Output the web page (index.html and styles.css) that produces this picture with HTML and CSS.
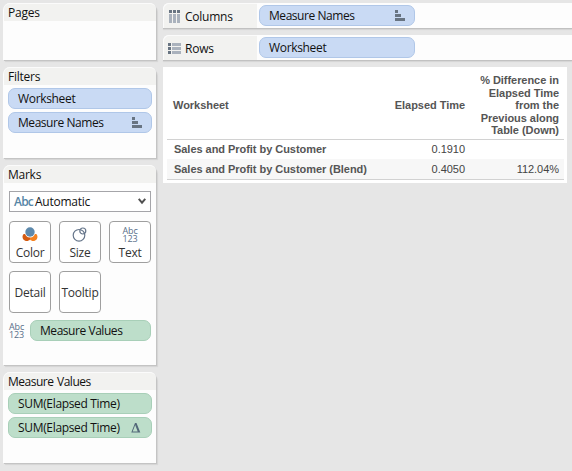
FILE: index.html
```html
<!DOCTYPE html>
<html lang="en">
<head>
<meta charset="utf-8">
<title>Worksheet</title>
<link rel="stylesheet" href="styles.css">
</head>
<body>
<div class="app">
  <aside class="side">
    <section class="card pages"><h2>Pages</h2></section>
    <section class="card filters">
      <h2>Filters</h2>
      <div class="pills">
        <div class="pill blue"><span>Worksheet</span></div>
        <div class="pill blue"><span class="tight">Measure Names</span>
          <svg class="sort" width="10" height="11"><path d="M0 0h3v3H0zM0 4h6v3H0zM0 8h10v3H0z" fill="#687482"/></svg></div>
      </div>
    </section>
    <section class="card marks">
      <h2>Marks</h2>
      <div class="select"><b>Abc</b><span>Automatic</span>
        <svg width="8" height="7"><path d="M.7.8L4 4.600 7.300.8" fill="none" stroke="#505050" stroke-width="2"/></svg></div>
      <div class="grid">
        <div class="btn"><svg width="16" height="15"><path d="M1.800 7C-.3 8.500.2 13 3.200 13.800c2 .6 3.700 0 4.800-1.300V7z" fill="#d45a10"/><path d="M14.200 7c2.100 1.500 1.600 6-1.400 6.800-2 .6-3.700 0-4.800-1.300V7z" fill="#f58220"/><circle cx="8" cy="5.300" r="5.300" fill="#fff"/><circle cx="8" cy="5" r="4.700" fill="#5d89ac"/></svg><span>Color</span></div>
        <div class="btn"><svg width="16" height="15"><g fill="none" stroke="#65758a" stroke-width="1.200"><circle cx="7" cy="8.300" r="5.800"/><circle cx="10.800" cy="4" r="3"/></g></svg><span>Size</span></div>
        <div class="btn"><div class="abc"><span>Abc</span><span>123</span></div><span>Text</span></div>
        <div class="btn plain"><span>Detail</span></div>
        <div class="btn plain"><span>Tooltip</span></div>
      </div>
      <div class="encoding"><div class="abc"><span>Abc</span><span>123</span></div><div class="pill green"><span class="tight">Measure Values</span></div></div>
    </section>
    <section class="card values">
      <h2>Measure Values</h2>
      <div class="pills">
        <div class="pill green"><span>SUM(Elapsed Time)</span></div>
        <div class="pill green"><span>SUM(Elapsed Time)</span>
          <svg class="delta" width="10" height="10"><path fill-rule="evenodd" d="M4 0h1.500L9.300 9.500H.3zM4.200 2L1.700 8.500h5z" fill="#536879"/></svg></div>
      </div>
    </section>
  </aside>
  <main class="main">
    <div class="shelf">
      <div class="label"><svg width="13" height="13"><path d="M1 0h3v3H1zM5 0h3v3H5zM9 0h3v3H9z" fill="#687482"/><path d="M1 4h3v9H1zM5 4h3v9H5zM9 4h3v9H9z" fill="#aab2bd"/></svg><span>Columns</span></div>
      <div class="pill blue"><span class="tight">Measure Names</span>
        <svg class="sort" width="10" height="11"><path d="M0 0h3v3H0zM0 4h6v3H0zM0 8h10v3H0z" fill="#687482"/></svg></div>
    </div>
    <div class="shelf">
      <div class="label"><svg width="13" height="13"><path d="M0 1h3v3H0zM0 5h3v3H0zM0 9h3v3H0z" fill="#687482"/><path d="M4 1h9v3H4zM4 5h9v3H4zM4 9h9v3H4z" fill="#aab2bd"/></svg><span>Rows</span></div>
      <div class="pill blue"><span>Worksheet</span></div>
    </div>
    <div class="view">
      <div class="row head"><div class="c1">Worksheet</div><div class="c2">Elapsed Time</div><div class="c3">% Difference in<br>Elapsed Time<br>from the<br>Previous along<br>Table (Down)</div></div>
      <div class="row first"><div class="c1">Sales and Profit by Customer</div><div class="c2">0.1910</div><div class="c3"></div></div>
      <div class="row alt"><div class="c1">Sales and Profit by Customer (Blend)</div><div class="c2">0.4050</div><div class="c3">112.04%</div></div>
    </div>
  </main>
</div>
</body>
</html>
```
FILE: styles.css
```css
* { box-sizing: border-box; }
body { margin: 0; background: #e6e6e6; color: #111; font: 12px/16px "Open Sans", "Noto Sans", sans-serif; overflow: hidden; }
svg { display: block; flex: none; }
.app { display: flex; gap: 7px; height: 471px; padding: 3px 0 0 3px; }
.side { width: 153px; display: flex; flex-direction: column; gap: 7px; flex: none; }
.card { background: #fdfdfd; border-radius: 7px 7px 0 0; box-shadow: 1px 1px 0 #c4c4c4, 2px 2px 1px #d4d4d4; flex: none; }
.card h2 { margin: 0 0 0 1px; height: 18px; padding: 1px 0 0 4px; background: #f2f2f0; border-top: 1px solid #fbfbfb; border-radius: 6px 6px 0 0; font-size: 12px; font-weight: 400; line-height: 16px; letter-spacing: -.55px; word-spacing: 1px; }
.pages h2, .filters h2, .marks h2 { letter-spacing: -.25px; }
.values h2 { letter-spacing: -.5px; }
.pages { height: 57px; }
.filters, .values { height: 91px; }
.marks { height: 200px; }
.pills { padding: 3px 4px 0 5px; display: flex; flex-direction: column; gap: 3px; }
.pill { height: 21px; border: 1px solid; border-radius: 7px; padding: 0 9px; display: flex; align-items: center; line-height: 19px; white-space: nowrap; letter-spacing: -.33px; }
.tight { letter-spacing: -.45px; }
.blue { background: #c9daf4; border-color: #b0c7e8; }
.green { background: #bddeca; border-color: #a8cfb8; }
.sort { margin-left: auto; }
.delta { margin-left: auto; margin-right: 1px; }
.select { margin: 8px 5px 0 6px; height: 21px; border: 1px solid #a5a5a9; background: #fff; display: flex; align-items: center; padding: 0 4px; letter-spacing: -.25px; }
.select b { width: 21px; color: #5686a6; font-weight: 600; letter-spacing: -.8px; }
.select svg { margin-left: auto; }
.grid { margin: 9px 5px 0 6px; display: grid; grid-template-columns: repeat(3, 42px); grid-auto-rows: 42px; gap: 8px; }
.btn { border: 1px solid #9f9f9f; border-radius: 4px; background: #fff; display: flex; flex-direction: column; align-items: center; justify-content: space-between; padding: 5px 0 1px; color: #333; white-space: nowrap; letter-spacing: -.25px; }
.plain { justify-content: center; padding: 1px 0 0; }
.abc { display: flex; flex-direction: column; font-size: 9px; line-height: 8px; color: #586e89; letter-spacing: -.1px; font-weight: 500; }
.encoding { margin: 7px 5px 0 6px; display: flex; align-items: center; justify-content: space-between; }
.encoding .pill { width: 121px; }
.main { flex: 1; min-width: 0; }
.shelf { display: flex; height: 25px; margin-bottom: 7px; background: #fdfdfd; border-radius: 6px 0 0; box-shadow: 0 1px 0 #c1c1c1, 0 2px 1px #d4d4d4; }
.label { width: 94px; background: #f2f2f0; border: solid #fbfbfb; border-width: 1px 0 0 1px; border-radius: 6px 0 0; display: flex; align-items: center; padding: 1px 0 0 4px; gap: 4px; letter-spacing: -.25px; }
.label svg { margin-top: -1px; }
.shelf .pill { width: 156px; margin: 2px 0 0 2px; }
.view { width: 404px; height: 116px; padding: 5px 3px 0 4px; background: #fff; color: #555; font: bold 11px/12.400px "Liberation Sans", sans-serif; letter-spacing: -.04px; }
.row { display: flex; align-items: center; height: 20px; }
.head { height: 68px; border-bottom: 1px solid #d2d2d2; }
.first { padding-bottom: 1px; }
.alt { background: #f7f7f7; border-bottom: 1px solid #d2d2d2; height: 21px; margin-top: -1px; }
.c1 { width: 215px; padding-left: 7px; white-space: nowrap; }
.head .c1 { padding-left: 6px; }
.c2 { width: 83px; text-align: right; }
.c3 { width: 94px; text-align: right; }
.row:not(.head) .c2, .row:not(.head) .c3 { font-weight: 400; color: #444; }
```
